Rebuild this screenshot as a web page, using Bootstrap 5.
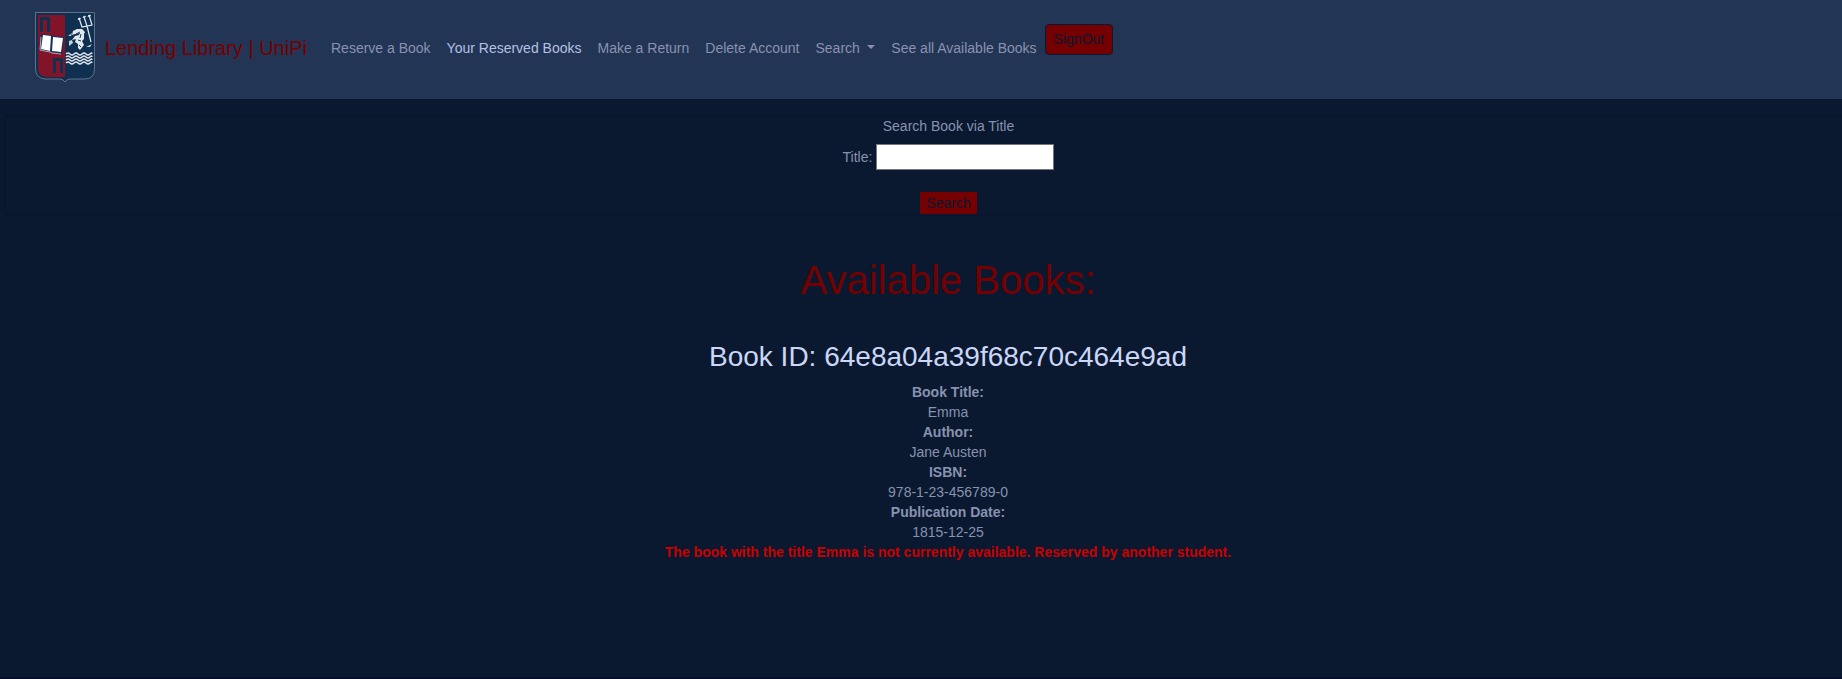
<!DOCTYPE html>
<html lang="en">
<head>
<meta charset="utf-8">
<meta name="viewport" content="width=device-width, initial-scale=1">
<title>Lending Library | UniPi</title>
<link href="https://cdn.jsdelivr.net/npm/bootstrap@5.3.0/dist/css/bootstrap.min.css" rel="stylesheet">
<style>
  :root { --navy: #0a192f; --slate: #8892b0; --light-slate: #ccd6f6; --maroon: #740001; }
  body {
    background: var(--navy); color: var(--slate);
    font-family: "Liberation Sans", Arial, sans-serif; font-size: 14px; line-height: 20px;
    border-bottom: 2px solid #06102e;
  }
  .site-nav { background: #233554; padding: 8px 19px 12px; }
  .site-nav .navbar-brand { color: var(--maroon); font-size: 20px; line-height: 30px; margin-right: 16px; padding: 4px 0; }
  .site-nav .nav-link { color: var(--slate); }
  .site-nav .nav-link:hover { color: #a8b2d1; }
  .site-nav .nav-link.active { color: #b4c0e4; }
  .crest { width: 60px; height: 71px; margin-right: 10px; }
  .btn-maroon, .btn-maroon:hover { background: var(--maroon); color: var(--navy); border-color: var(--navy); }
  .signout { margin-bottom: 16px; }
  .search-panel { border: 1px solid #08152a; border-right: 0; border-radius: 4px 0 0 4px; margin: 16px 0 0 4px; padding: 0 0 1px 50px; }
  .title-input { width: 178px; height: 26px; border: 1px solid #767676; padding: 1px 2px; background: #fff; }
  .plain-submit { background: var(--maroon); color: var(--navy); border: 0; padding: 1px 6px; margin-top: 22px; }
  .results { padding-left: 54px; }
  .results h1 { color: var(--maroon); font-size: 40px; line-height: 48px; font-weight: 400; margin: 40px 0 36px; }
  .results h2 { color: var(--light-slate); font-size: 28px; line-height: 34px; font-weight: 400; margin-bottom: 8px; }
  .unavailable { color: #c80000; }
</style>
</head>
<body class="min-vh-100">
<nav class="navbar navbar-expand-md site-nav">
  <div class="container-fluid justify-content-start px-3">
    <a class="navbar-brand d-flex align-items-center" href="#">
      <svg class="crest" viewBox="0 0 60 71" aria-hidden="true">
        <path d="M.5.5h59V57q0 10-10 10H35q-3 0-5 3-2-3-5-3H10Q.5 66 .5 57z" fill="#103052"/>
        <path d="M3 3h27v62H11Q3 64 3 56z" fill="#821429"/>
        <path d="M.5.5h59V57q0 10-10 10H35q-3 0-5 3-2-3-5-3H10Q.5 66 .5 57z" fill="none" stroke="#71839c" stroke-width=".8"/>
        <path d="M5 20V5h10v15h-3V8H8v12zM18 61V46h10v15h-3V49h-4v12z" fill="#103052"/>
        <path d="M6 22l10 1 2 1 11 1-2 17-10-2-13-2z" fill="#15315a"/>
        <path d="M8 23l8 1-1 15-9-2zM18 25l10 1-2 14-9-1z" fill="#fff"/>
        <path d="M6 25l-1 13 10 2 2 1 9 1" fill="none" stroke="#c4c9d6" stroke-width=".8"/>
        <path d="M44 6l3 9 10-2-3-10M49 5l3 9 4 16" fill="none" stroke="#e5eaf0" stroke-width="1.2"/>
        <path d="M43 8l1-2 2 1M48 6l1-2 2 1M53 5l1-2 2 1" fill="none" stroke="#fff" stroke-width=".9"/>
        <path d="M38 19l4-2h5l3 3-1 2v5l-2 2 2 4-4 5-2-2v-4l-3-2 1-3-4 1 3-4 4-1 1-2-5 1-3 1z" fill="#e3e8ee"/>
        <path d="M33 24l4-3-1 3zM34 29l3-1 1 3-4 3zM51 35l6-3-2 3zM35 20l3-1z" fill="#c6cfda"/>
        <path d="M41 22l4-2M43 28l3 1M46 22l-1 4M44 33l2 2" stroke="#17375a" fill="none"/>
        <g fill="none" stroke="#e5eaf0" stroke-width="1.3">
          <path id="wave" d="M31 42q2-2 4 0t4 0 4 0 4 0 4 0 4 0 2 0"/>
          <use href="#wave" y="3"/><use href="#wave" y="6"/><use href="#wave" y="9"/>
        </g>
      </svg>
      Lending Library | UniPi
    </a>
    <button class="navbar-toggler" type="button" data-bs-toggle="collapse" data-bs-target="#mainNav" aria-label="Toggle navigation"><span class="navbar-toggler-icon"></span></button>
    <div class="collapse navbar-collapse" id="mainNav">
      <ul class="navbar-nav">
        <li class="nav-item"><a class="nav-link" href="#">Reserve a Book</a></li>
        <li class="nav-item"><a class="nav-link active" href="#">Your Reserved Books</a></li>
        <li class="nav-item"><a class="nav-link" href="#">Make a Return</a></li>
        <li class="nav-item"><a class="nav-link" href="#">Delete Account</a></li>
        <li class="nav-item dropdown"><a class="nav-link dropdown-toggle" href="#" role="button" aria-expanded="false">Search&nbsp;</a></li>
        <li class="nav-item"><a class="nav-link" href="#">See all Available Books</a></li>
      </ul>
      <form class="signout"><button class="btn btn-sm btn-maroon" type="submit">SignOut</button></form>
    </div>
  </div>
</nav>
<main class="text-center">
  <form class="search-panel">
    <p class="mb-2">Search Book via Title</p>
    <div class="d-flex justify-content-center align-items-center gap-1">
      <label for="title">Title:</label>
      <input class="title-input" type="text" id="title" name="title">
    </div>
    <button class="plain-submit" type="submit">Search</button>
  </form>
  <section class="results">
    <h1>Available Books:</h1>
    <article>
      <h2>Book ID: 64e8a04a39f68c70c464e9ad</h2>
      <dl class="mb-0">
        <dt>Book Title:</dt><dd class="mb-0">Emma</dd>
        <dt>Author:</dt><dd class="mb-0">Jane Austen</dd>
        <dt>ISBN:</dt><dd class="mb-0">978-1-23-456789-0</dd>
        <dt>Publication Date:</dt><dd class="mb-0">1815-12-25</dd>
      </dl>
      <p class="unavailable fw-bold">The book with the title Emma is not currently available. Reserved by another student.</p>
    </article>
  </section>
</main>
<script src="https://cdn.jsdelivr.net/npm/bootstrap@5.3.0/dist/js/bootstrap.bundle.min.js"></script>
</body>
</html>
